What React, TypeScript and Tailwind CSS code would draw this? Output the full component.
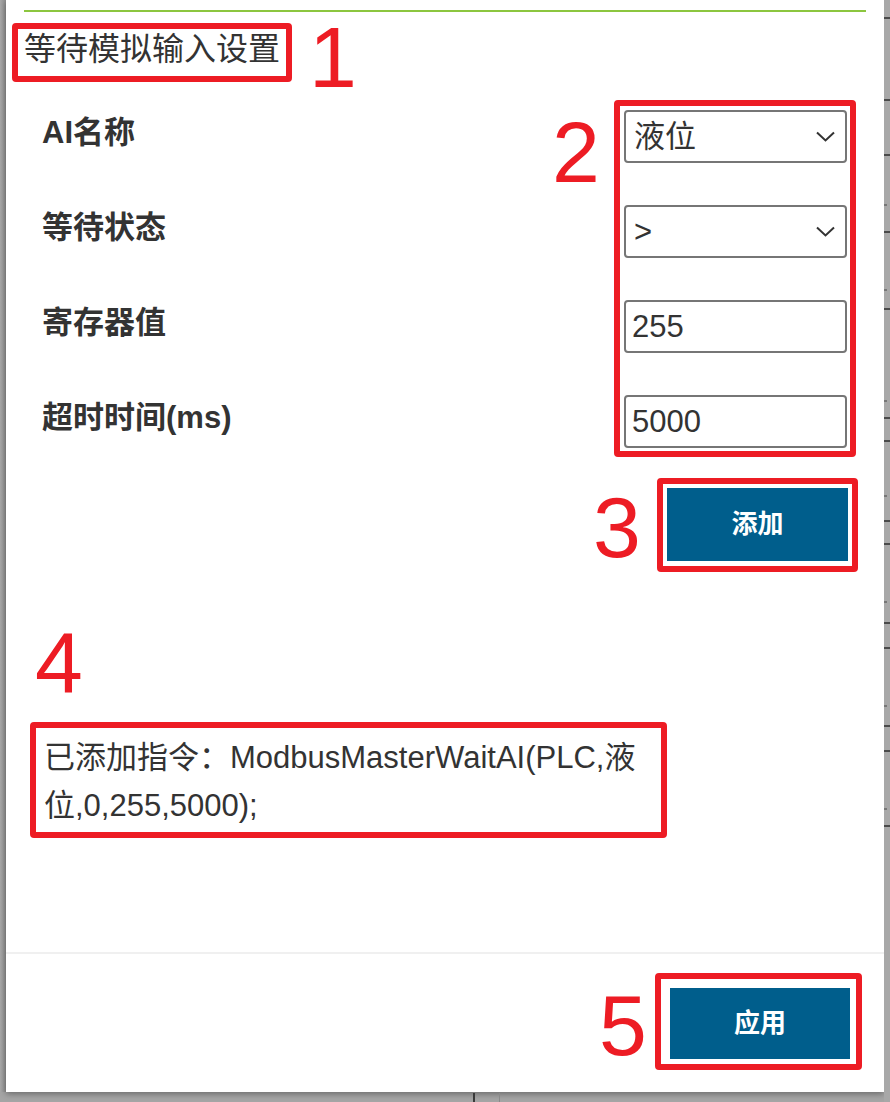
import React from "react";

const FONT = { fontFamily: '"Liberation Sans", "Noto Sans CJK SC", sans-serif' };

function Chevron() {
  return (
    <svg width="19" height="11" viewBox="0 0 19 11" fill="none" className="shrink-0">
      <polyline points="1,1.5 9.5,9.5 18,1.5" stroke="#333" strokeWidth="2" strokeLinejoin="miter" />
    </svg>
  );
}

function SelectBox({ value }: { value: string }) {
  return (
    <div className="w-[223px] h-[53px] border-2 border-[#767676] rounded-[4px] bg-white flex items-center justify-between pl-[8px] pr-[10px] text-[31px] text-[#333] leading-none">
      <span>{value}</span>
      <Chevron />
    </div>
  );
}

function InputBox({ value }: { value: string }) {
  return (
    <div className="w-[223px] h-[53px] border-2 border-[#767676] rounded-[4px] bg-white flex items-center pl-[6px] text-[31px] text-[#333] leading-none">
      {value}
    </div>
  );
}

function Row({ label, children }: { label: string; children: React.ReactNode }) {
  return (
    <div className="flex items-start justify-between pl-[36px] pr-[37px] h-[53px]">
      <div className="pt-[4px] text-[31px] leading-[37px] font-bold text-[#333]">{label}</div>
      {children}
    </div>
  );
}

export default function App() {
  const digit = "absolute text-[86px] leading-none text-[#ed1c24] font-normal";
  const box = "absolute border-[6px] border-[#ed1c24] rounded-[4px]";
  return (
    <div style={FONT} className="w-[890px] h-[1102px] bg-[#a5a5a5] flex items-start overflow-hidden relative">
      <div className="w-[6px] h-[1092px] bg-gradient-to-r from-[#a8a8a8] to-[#8f8f8f]" />
      <div className="relative w-[878px] h-[1092px] bg-white flex flex-col shadow-[0_2px_6px_rgba(0,0,0,0.35)]">
        <div className="mt-[10px] mx-[18px] h-[2px] bg-[#8cc63f]" />
        <div className="mt-[19px] ml-[18px] text-[32px] leading-[37px] text-[#333]">等待模拟输入设置</div>

        <div className="mt-[42px] flex flex-col gap-[42px]">
          <Row label="AI名称">
            <SelectBox value="液位" />
          </Row>
          <Row label="等待状态">
            <SelectBox value=">" />
          </Row>
          <Row label="寄存器值">
            <InputBox value="255" />
          </Row>
          <Row label="超时时间(ms)">
            <InputBox value="5000" />
          </Row>
        </div>

        <div className="mt-[40px] flex justify-end pr-[36px]">
          <div className="w-[181px] h-[73px] bg-[#005e8c] text-white text-[26px] font-bold flex items-center justify-center">
            添加
          </div>
        </div>

        <div className="mt-[173px] ml-[38px] w-[612px] text-[31px] leading-[48px] text-[#333]">
          已添加指令：ModbusMasterWaitAI(PLC,液位,0,255,5000);
        </div>

        <div className="mt-[122px] h-[2px] bg-[#f0f0f0]" />

        <div className="mt-[34px] flex justify-end pr-[34px]">
          <div className="w-[180px] h-[71px] bg-[#005e8c] text-white text-[26px] font-bold flex items-center justify-center">
            应用
          </div>
        </div>

        {/* annotations */}
        <div className={`${box} border-[5px] left-[6px] top-[23px] w-[280px] h-[59px]`} />
        <div className={`${digit} left-[303px] top-[14px]`}>1</div>

        <div className={`${box} left-[608px] top-[100px] w-[242px] h-[357px]`} />
        <div className={`${digit} left-[546px] top-[109px]`}>2</div>

        <div className={`${box} left-[651px] top-[478px] w-[201px] h-[94px]`} />
        <div className={`${digit} left-[587px] top-[484px]`}>3</div>

        <div className={`${digit} left-[29px] top-[619px]`}>4</div>
        <div className={`${box} left-[24px] top-[722px] w-[637px] h-[116px]`} />

        <div className={`${box} left-[649px] top-[973px] w-[207px] h-[97px]`} />
        <div className={`${digit} left-[593px] top-[982px]`}>5</div>
      </div>

      {/* right background strip with table lines */}
      <div className="relative w-[6px] h-[1102px] bg-[#a8a8a8]">
        {[17, 99, 154, 231, 308, 417, 440, 520, 543, 622, 647, 725, 750, 825].map((y) => (
          <div key={y} className="absolute left-0 right-0 h-[2px] bg-[#4a4a4a]" style={{ top: y }} />
        ))}
        {[204, 289, 400, 495, 601, 705, 808].map((y) => (
          <div key={y} className="absolute left-0 w-[3px] h-[2px] bg-[#777]" style={{ top: y }} />
        ))}
      </div>

      <div className="absolute left-[473px] top-[1093px] w-[2px] h-[9px] bg-[#3a3a3a]" />
      <div className="absolute left-[499px] top-[1093px] w-[1px] h-[9px] bg-[#8a8a8a]" />
    </div>
  );
}
